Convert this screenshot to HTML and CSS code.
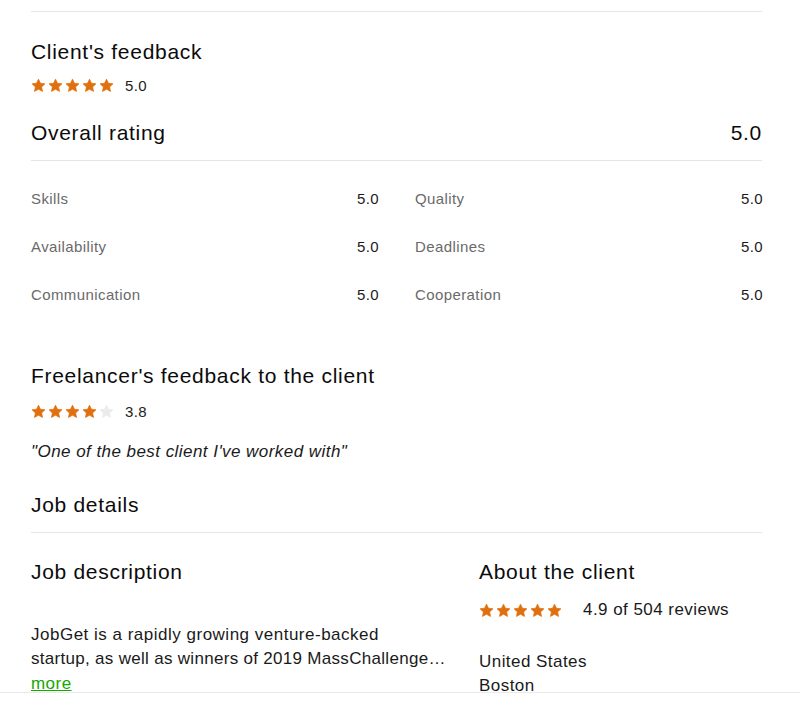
FILE: index.html
```html
<!DOCTYPE html>
<html lang="en">
<head>
<meta charset="utf-8">
<title>Feedback</title>
<link rel="stylesheet" href="styles.css">
</head>
<body>
<svg width="0" height="0" class="defs">
  <defs>
    <symbol id="star" viewBox="0 0 24 24">
      <path d="M12 1.8l3.1 6.6 7.2.9-5.3 5 1.4 7.1L12 17.9l-6.4 3.5 1.4-7.1-5.3-5 7.2-.9z" stroke-linejoin="round" stroke-width="1.2"/>
    </symbol>
  </defs>
</svg>
<div class="viewport">
  <div class="page">
    <hr class="rule top-rule">

    <h2 class="h2 feedback-title">Client's feedback</h2>
    <div class="rating">
      <span class="stars">
        <svg class="star on"><use href="#star"/></svg>
        <svg class="star on"><use href="#star"/></svg>
        <svg class="star on"><use href="#star"/></svg>
        <svg class="star on"><use href="#star"/></svg>
        <svg class="star on"><use href="#star"/></svg>
      </span>
      <span class="score">5.0</span>
    </div>

    <div class="overall">
      <h2 class="h2">Overall rating</h2>
      <span class="h2">5.0</span>
    </div>

    <div class="scores">
      <div class="score-row"><span class="label">Skills</span><span class="val">5.0</span></div>
      <div class="score-row"><span class="label">Quality</span><span class="val">5.0</span></div>
      <div class="score-row"><span class="label">Availability</span><span class="val">5.0</span></div>
      <div class="score-row"><span class="label">Deadlines</span><span class="val">5.0</span></div>
      <div class="score-row"><span class="label">Communication</span><span class="val">5.0</span></div>
      <div class="score-row"><span class="label">Cooperation</span><span class="val">5.0</span></div>
    </div>

    <h2 class="h2 freelancer-title">Freelancer's feedback to the client</h2>
    <div class="rating">
      <span class="stars">
        <svg class="star on"><use href="#star"/></svg>
        <svg class="star on"><use href="#star"/></svg>
        <svg class="star on"><use href="#star"/></svg>
        <svg class="star on"><use href="#star"/></svg>
        <svg class="star off"><use href="#star"/></svg>
      </span>
      <span class="score">3.8</span>
    </div>
    <p class="quote">"One of the best client I've worked with"</p>

    <h2 class="h2 job-title">Job details</h2>

    <div class="job">
      <div class="job-desc">
        <h2 class="h2">Job description</h2>
        <p class="desc">
          <span class="line">JobGet is a rapidly growing venture-backed</span>
          <span class="line second">startup, as well as winners of 2019 MassChallenge…</span>
        </p>
        <a class="more" href="#">more</a>
      </div>
      <div class="client">
        <h2 class="h2">About the client</h2>
        <div class="rating big">
          <span class="stars">
            <svg class="star on"><use href="#star"/></svg>
            <svg class="star on"><use href="#star"/></svg>
            <svg class="star on"><use href="#star"/></svg>
            <svg class="star on"><use href="#star"/></svg>
            <svg class="star on"><use href="#star"/></svg>
          </span>
          <span class="reviews">4.9 of 504 reviews</span>
        </div>
        <p class="location">United States<br>Boston</p>
      </div>
    </div>
  </div>
</div>
</body>
</html>
```

FILE: styles.css
```css
* { box-sizing: border-box; }

html, body {
  margin: 0;
  padding: 0;
  background: #ffffff;
}

body {
  font-family: "Liberation Sans", Arial, Helvetica, sans-serif;
  color: #111111;
}

.defs { position: absolute; }

.viewport {
  height: 693px;
  overflow: hidden;
  border-bottom: 1px solid #e9e9e9;
}

.page {
  margin-left: 31px;
  width: 731px;
}

.rule {
  border: 0;
  border-top: 1px solid #e6e6e6;
  margin: 0;
}

.top-rule {
  margin-top: 11px;
}

.h2 {
  margin: 0;
  font-size: 21px;
  line-height: 28px;
  letter-spacing: 0.7px;
  font-weight: 400;
  color: #0b0b0b;
}

.feedback-title { margin-top: 26px; }

.rating {
  display: flex;
  align-items: center;
  height: 20px;
  margin-top: 9px;
}

.stars {
  display: flex;
  gap: 2px;
}

.star {
  width: 15px;
  height: 15px;
}

.star.on { fill: #e0700e; stroke: #e0700e; }
.star.off { fill: #ebebee; stroke: #ebebee; }

.score {
  margin-left: 11px;
  font-size: 15px;
  letter-spacing: 0.4px;
  color: #222222;
}

.overall {
  display: flex;
  justify-content: space-between;
  margin-top: 24px;
  padding-bottom: 13px;
  border-bottom: 1px solid #e6e6e6;
}

.scores {
  display: grid;
  grid-template-columns: 348px 348px;
  column-gap: 36px;
  margin-top: 13px;
}

.score-row {
  display: flex;
  justify-content: space-between;
  align-items: center;
  height: 48px;
  font-size: 15px;
  letter-spacing: 0.4px;
}

.label { color: #6a6a6a; }
.val { color: #1c1c1c; }

.freelancer-title { margin-top: 44px; }

.freelancer-title + .rating { margin-top: 11px; }

.quote {
  margin: 19px 0 0;
  font-size: 17px;
  line-height: 24px;
  letter-spacing: 0.45px;
  font-style: italic;
  color: #1a1a1a;
}

.job-title {
  margin-top: 27px;
  padding-bottom: 13px;
  border-bottom: 1px solid #e6e6e6;
}

.job {
  display: flex;
  gap: 28px;
  margin-top: 25px;
}

.job-desc {
  width: 420px;
}

.client {
  flex: 1;
}

.desc {
  margin: 37px 0 0;
  font-size: 17px;
  line-height: 24px;
  letter-spacing: 0.5px;
  color: #1a1a1a;
}

.line {
  display: block;
  white-space: nowrap;
}

.line.second {
  letter-spacing: 0.3px;
}

.more {
  display: inline-block;
  font-size: 17px;
  line-height: 26px;
  letter-spacing: 0.45px;
  color: #14a800;
  text-decoration: underline;
}

.rating.big { margin-top: 14px; }

.reviews {
  margin-left: 21px;
  font-size: 17px;
  letter-spacing: 0.45px;
  color: #1a1a1a;
}

.location {
  margin: 30px 0 0;
  font-size: 17px;
  line-height: 24px;
  letter-spacing: 0.45px;
  color: #1a1a1a;
}
```
